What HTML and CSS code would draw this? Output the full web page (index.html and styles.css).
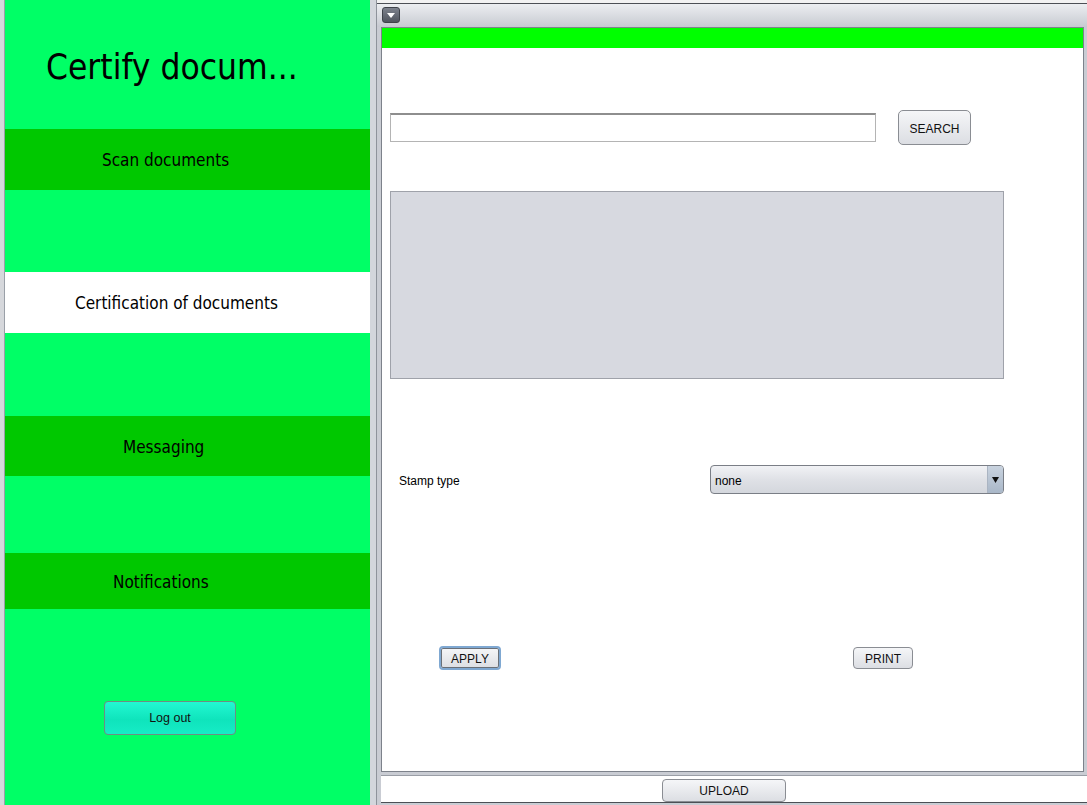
FILE: index.html
```html
<!DOCTYPE html>
<html>
<head>
<meta charset="utf-8">
<link rel="stylesheet" href="styles.css">
</head>
<body>
<div class="app">
  <div class="desk"></div>
  <aside class="side">
    <div class="title">Certify docum...</div>
    <div class="band dark pl-scan">Scan documents</div>
    <div class="gap g1"></div>
    <div class="band white pl-cert">Certification of documents</div>
    <div class="gap g2"></div>
    <div class="band dark pl-msg">Messaging</div>
    <div class="gap g3"></div>
    <div class="band dark short pl-not">Notifications</div>
    <div class="gap g4"></div>
    <button class="logout">Log out</button>
  </aside>
  <div class="split"></div>
  <main class="frame">
    <div class="titlebar">
      <span class="tb-btn"><svg width="8" height="5" viewBox="0 0 8 5"><path d="M0 0H8L4 5Z" fill="#fff"/></svg></span>
    </div>
    <div class="content">
      <div class="greenbar"></div>
      <div class="body">
        <div class="search-row">
          <input class="search-input" type="text">
          <button class="btn search-btn">SEARCH</button>
        </div>
        <div class="greybox"></div>
        <div class="stamp-row">
          <span class="label">Stamp type</span>
          <div class="combo">
            <span class="combo-text">none</span>
            <span class="combo-arrow"><svg width="7" height="6" viewBox="0 0 7 6"><path d="M0 0H7L3.5 6Z" fill="#111"/></svg></span>
          </div>
        </div>
        <div class="action-row">
          <button class="btn apply">APPLY</button>
          <button class="btn print">PRINT</button>
        </div>
      </div>
    </div>
    <div class="bottom">
      <button class="btn upload">UPLOAD</button>
    </div>
  </main>
</div>
</body>
</html>
```
FILE: styles.css
```css
* { box-sizing: border-box; }
html, body { margin: 0; padding: 0; }
body {
  width: 1087px;
  height: 805px;
  overflow: hidden;
  background: #f2f2f2;
  font-family: "Liberation Sans", Arial, sans-serif;
}
.app {
  display: flex;
  height: 805px;
}
.desk {
  width: 5px;
  background: #d6d8dc;
  border-right: 1px solid #9aa0a8;
}
.side {
  width: 365px;
  background: #00ff66;
  display: flex;
  flex-direction: column;
  font-family: "DejaVu Sans Condensed", "DejaVu Sans", sans-serif;
  color: #000;
}
.title {
  height: 129px;
  display: flex;
  align-items: center;
  padding: 4px 0 0 41px;
  font-size: 35px;
}
.band {
  height: 61px;
  flex-shrink: 0;
  display: flex;
  align-items: center;
  font-size: 17px;
  padding-top: 1px;
}
.band.short { height: 56px; }
.band.dark { background: #00c800; }
.band.white { background: #ffffff; }
.pl-scan { padding-left: 97px; }
.pl-cert { padding-left: 70px; }
.pl-msg { padding-left: 118px; height: 60px; }
.pl-not { padding-left: 108px; }
.g1 { height: 82px; }
.g2 { height: 83px; }
.g3 { height: 77px; }
.g4 { height: 92px; }
.logout {
  margin-left: 99px;
  width: 132px;
  height: 34px;
  border: 1px solid #6f8c84;
  border-radius: 4px;
  background: linear-gradient(#22f8d2, #0fe4bc 55%, #16ecc6);
  font-family: "Liberation Sans", Arial, sans-serif;
  font-size: 12.5px;
  color: #111;
  padding: 0;
}
.split {
  width: 7px;
  background: #d3d6dc;
  border-right: 1px solid #8e939b;
}
.frame {
  width: 710px;
  margin-top: 3px;
  display: flex;
  flex-direction: column;
  background: #c9ccd3;
  border-top: 1px solid #4c4f55;
}
.titlebar {
  height: 23px;
  flex-shrink: 0;
  background: linear-gradient(#eceef1, #c7cad1);
  padding: 3px 0 0 5px;
}
.tb-btn {
  display: flex;
  align-items: center;
  justify-content: center;
  width: 18px;
  height: 16px;
  border-radius: 3px;
  border: 1px solid #3e424a;
  background: linear-gradient(#7d828d, #4f545e);
}
.content {
  height: 745px;
  flex-shrink: 0;
  margin: 0 3px 0 4px;
  border: 1px solid #7d828b;
  background: #fff;
  display: flex;
  flex-direction: column;
}
.greenbar {
  height: 20px;
  background: #00ff00;
}
.body {
  flex: 1;
  font-size: 12px;
  color: #000;
}
.search-row {
  display: flex;
  align-items: center;
  margin-top: 62px;
  padding-left: 8px;
}
.search-input {
  width: 486px;
  height: 29px;
  border: 1px solid #b4b4b4;
  border-top: 2px solid #8e8e8e;
  margin: 0;
  padding: 0;
  background: #fff;
}
.btn {
  font-family: "Liberation Sans", Arial, sans-serif;
  font-size: 12px;
  color: #111;
  background: linear-gradient(#f5f6f8, #dcdee3);
  border: 1px solid #8a8d93;
  border-radius: 4px;
  padding: 0;
}
.search-btn {
  margin-left: 22px;
  width: 73px;
  height: 35px;
  border-radius: 5px;
  padding-top: 2px;
}
.greybox {
  margin: 46px 0 0 8px;
  width: 614px;
  height: 188px;
  background: #d7d9e0;
  border: 1px solid #9fa2aa;
}
.stamp-row {
  display: flex;
  align-items: center;
  margin-top: 86px;
  padding-left: 17px;
}
.label {
  width: 311px;
  padding-top: 2px;
}
.combo {
  width: 294px;
  height: 29px;
  display: flex;
  border: 1px solid #7a7e86;
  border-radius: 4px;
  background: linear-gradient(#f1f2f5, #dfe1e6 50%, #d4d7dd);
  overflow: hidden;
}
.combo-text {
  flex: 1;
  display: flex;
  align-items: center;
  padding: 2px 0 0 4px;
}
.combo-arrow {
  width: 16px;
  display: flex;
  align-items: center;
  justify-content: center;
  border-left: 1px solid #aab4c2;
  background: linear-gradient(#c9d3df, #a9b7c8);
}
.action-row {
  display: flex;
  align-items: center;
  margin-top: 152px;
  padding-left: 57px;
}
.apply {
  width: 62px;
  height: 24px;
  border: 2px solid #7fa8d2;
  box-shadow: inset 0 0 0 1px #6a7078;
  padding-top: 1px;
}
.print {
  margin-left: 352px;
  width: 60px;
  height: 22px;
  padding-top: 1px;
}
.bottom {
  height: 28px;
  flex-shrink: 0;
  margin: 3px 0 2px 4px;
  background: #fff;
  border-top: 1px solid #9a9ea6;
  border-bottom: 1px solid #4c4f55;
  display: flex;
  align-items: flex-start;
  padding: 3px 0 0 281px;
}
.upload {
  width: 124px;
  height: 23px;
  padding-top: 1px;
}
```
